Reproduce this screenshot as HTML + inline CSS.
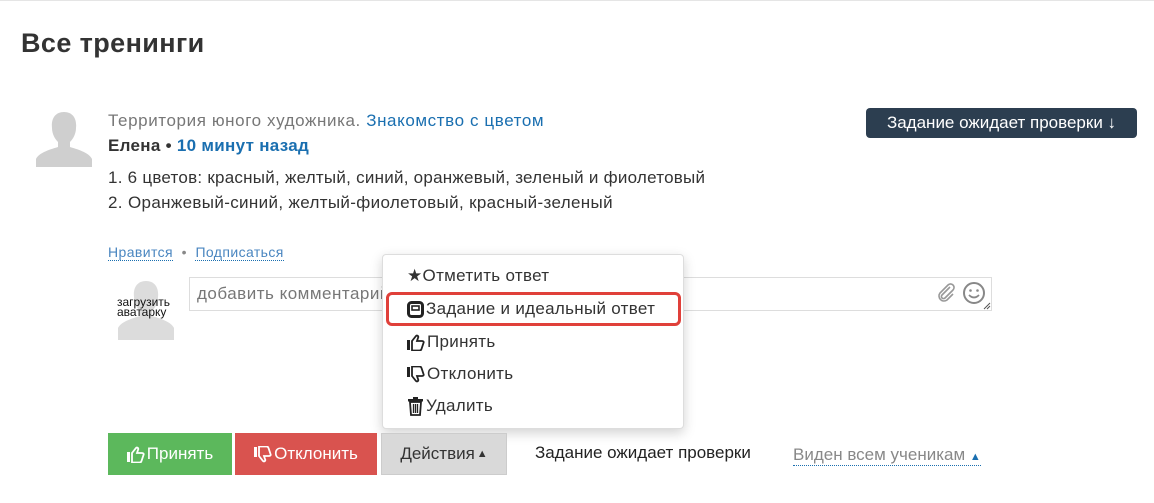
<!DOCTYPE html>
<html><head><meta charset="utf-8"><style>
*{box-sizing:border-box;margin:0;padding:0}
body{width:1154px;height:503px;overflow:hidden;background:#fff;font-family:"Liberation Sans","DejaVu Sans",sans-serif;color:#333;position:relative;border-top:1px solid #e5e5e5}
.a{position:absolute;white-space:nowrap}
h1{position:absolute;left:21px;top:27px;font-size:27px;letter-spacing:.4px;font-weight:bold;color:#333}
.blue{color:#1a6fb0}
.dot{border-bottom:1px dotted #1a6fb0;color:#4a86c0}
.t{font-size:17px;letter-spacing:.6px}
.menu{position:absolute;left:382px;top:253px;width:302px;height:175px;background:#fff;border:1px solid #ddd;border-radius:4px;box-shadow:0 4px 12px rgba(0,0,0,.18)}
.mi{position:absolute;left:24px;font-size:17px;letter-spacing:.3px;color:#333;display:flex;align-items:center;gap:2px}
.btn{position:absolute;top:432px;height:42px;font-size:17px;display:flex;align-items:center;justify-content:center;color:#fff;gap:2px}
</style></head><body>
<h1>Все тренинги</h1>
<svg class="a" style="left:35px;top:108px" width="58" height="58" viewBox="0 0 58 58"><path d="M29 3c-9 0-13 7-12 16 0 6 3 11 6 14v5c-10 3-19 6-22 12v8h56v-8c-3-6-12-9-22-12v-5c3-3 6-8 6-14 1-9-3-16-12-16z" fill="#cfcfcf"/></svg>
<div class="a t" style="left:108px;top:110px;color:#777">Территория юного художника. <span class="blue">Знакомство с цветом</span></div>
<div class="a t" style="left:108px;top:135px;font-weight:bold;color:#333;letter-spacing:.3px">Елена • <span class="blue">10 минут назад</span></div>
<div class="a t" style="left:108px;top:167px;color:#333;letter-spacing:.25px">1. 6 цветов: красный, желтый, синий, оранжевый, зеленый и фиолетовый</div>
<div class="a t" style="left:108px;top:192px;color:#333;letter-spacing:.35px">2. Оранжевый-синий, желтый-фиолетовый, красный-зеленый</div>
<div class="a" style="left:108px;top:243px;font-size:14px;letter-spacing:.4px;color:#888"><span class="dot">Нравится</span> &nbsp;•&nbsp; <span class="dot">Подписаться</span></div>
<div class="a" style="left:866px;top:107px;width:271px;height:30px;background:#2c3e50;border-radius:4px;color:#fff;font-size:17px;line-height:30px;text-align:center">Задание ожидает проверки <b>↓</b></div>
<svg class="a" style="left:113px;top:277px" width="67" height="62" viewBox="0 0 67 62"><path d="M33 3c-9 0-13 7-12 16 0 6 3 11 6 14v5c-10 3-19 6-22 12v12h56v-12c-3-6-12-9-22-12v-5c3-3 6-8 6-14 1-9-3-16-12-16z" fill="#dcdcdc"/></svg>
<div class="a" style="left:117px;top:296px;font-size:12px;line-height:10px;color:#111">загрузить<br>аватарку</div>
<div class="a" style="left:189px;top:276px;width:803px;height:34px;border:1px solid #ddd;font-size:17px;letter-spacing:.5px;color:#777;padding:6px 7px">добавить комментарий</div>
<svg class="a" style="left:935px;top:281px" width="22" height="22" viewBox="0 0 22 22"><path d="M15 5l-8 8a2 2 0 0 0 3 3l8-8a3.5 3.5 0 0 0-5-5l-8 8a5 5 0 0 0 7 7l6-6" fill="none" stroke="#999" stroke-width="1.6"/></svg>
<svg class="a" style="left:962px;top:280px" width="30" height="30" viewBox="0 0 30 30"><circle cx="12" cy="12" r="10" fill="none" stroke="#888" stroke-width="2"/><circle cx="8.5" cy="9.5" r="1.3" fill="#888"/><circle cx="15.5" cy="9.5" r="1.3" fill="#888"/><path d="M7 14q5 5 10 0" fill="none" stroke="#888" stroke-width="1.8"/><path d="M22 28l6-6M25 28l3-3" stroke="#555" stroke-width="1"/></svg>
<div class="menu">
<div class="mi" style="top:11px">★Отметить ответ</div>
<div class="mi" style="top:44px"><svg width="17" height="17" viewBox="0 0 17 17"><rect x="1.5" y="1.5" width="14" height="14" rx="3" fill="none" stroke="#222" stroke-width="3"/><rect x="5" y="5" width="7" height="4" fill="none" stroke="#222" stroke-width="1.6"/></svg>Задание и идеальный ответ</div>
<div class="mi" style="top:77px"><svg width="18" height="17" viewBox="0 0 18 17"><rect x="0" y="6" width="3" height="10" fill="#222"/><path d="M5 7l4-5c1-1 3 0 2 2l-1 3h5c1.5 0 2 1 1.5 2l-2 6c-.3 1-1 1.5-2 1.5H5z" fill="none" stroke="#222" stroke-width="1.8"/></svg>Принять</div>
<div class="mi" style="top:109px"><svg width="18" height="17" viewBox="0 0 18 17"><rect x="0" y="1" width="3" height="10" fill="#222"/><path d="M5 10l4 5c1 1 3 0 2-2l-1-3h5c1.5 0 2-1 1.5-2l-2-6c-.3-1-1-1.5-2-1.5H5z" fill="none" stroke="#222" stroke-width="1.8"/></svg>Отклонить</div>
<div class="mi" style="top:141px"><svg width="17" height="19" viewBox="0 0 17 19"><rect x="1" y="2" width="15" height="2.5" fill="#222"/><rect x="6" y="0" width="5" height="2" fill="#222"/><path d="M3 5h11l-1 13H4z" fill="none" stroke="#222" stroke-width="1.8"/><path d="M6.5 7v9M8.5 7v9M10.5 7v9" stroke="#222" stroke-width="1.3"/></svg>Удалить</div>
</div>
<div class="a" style="left:386px;top:291px;width:295px;height:34px;border:3px solid #e0403a;border-radius:6px"></div>
<div class="btn" style="left:108px;width:124px;background:#5cb85c"><svg width="18" height="17" viewBox="0 0 18 17"><rect x="0" y="6" width="3" height="10" fill="#fff"/><path d="M5 7l4-5c1-1 3 0 2 2l-1 3h5c1.5 0 2 1 1.5 2l-2 6c-.3 1-1 1.5-2 1.5H5z" fill="none" stroke="#fff" stroke-width="1.8"/></svg>Принять</div>
<div class="btn" style="left:235px;width:142px;background:#d9534f"><svg width="18" height="17" viewBox="0 0 18 17"><rect x="0" y="1" width="3" height="10" fill="#fff"/><path d="M5 10l4 5c1 1 3 0 2-2l-1-3h5c1.5 0 2-1 1.5-2l-2-6c-.3-1-1-1.5-2-1.5H5z" fill="none" stroke="#fff" stroke-width="1.8"/></svg>Отклонить</div>
<div class="btn" style="left:381px;width:126px;background:#d9d9d9;color:#333;border:1px solid #ccc">Действия <span style="font-size:11px">▲</span></div>
<div class="a" style="left:535px;top:442px;font-size:17px;color:#222">Задание ожидает проверки</div>
<div class="a" style="left:793px;top:444px;font-size:17px;color:#888;border-bottom:1px dotted #1a6fb0">Виден всем ученикам <span style="color:#1a6fb0;font-size:11px">▲</span></div>
</body></html>
